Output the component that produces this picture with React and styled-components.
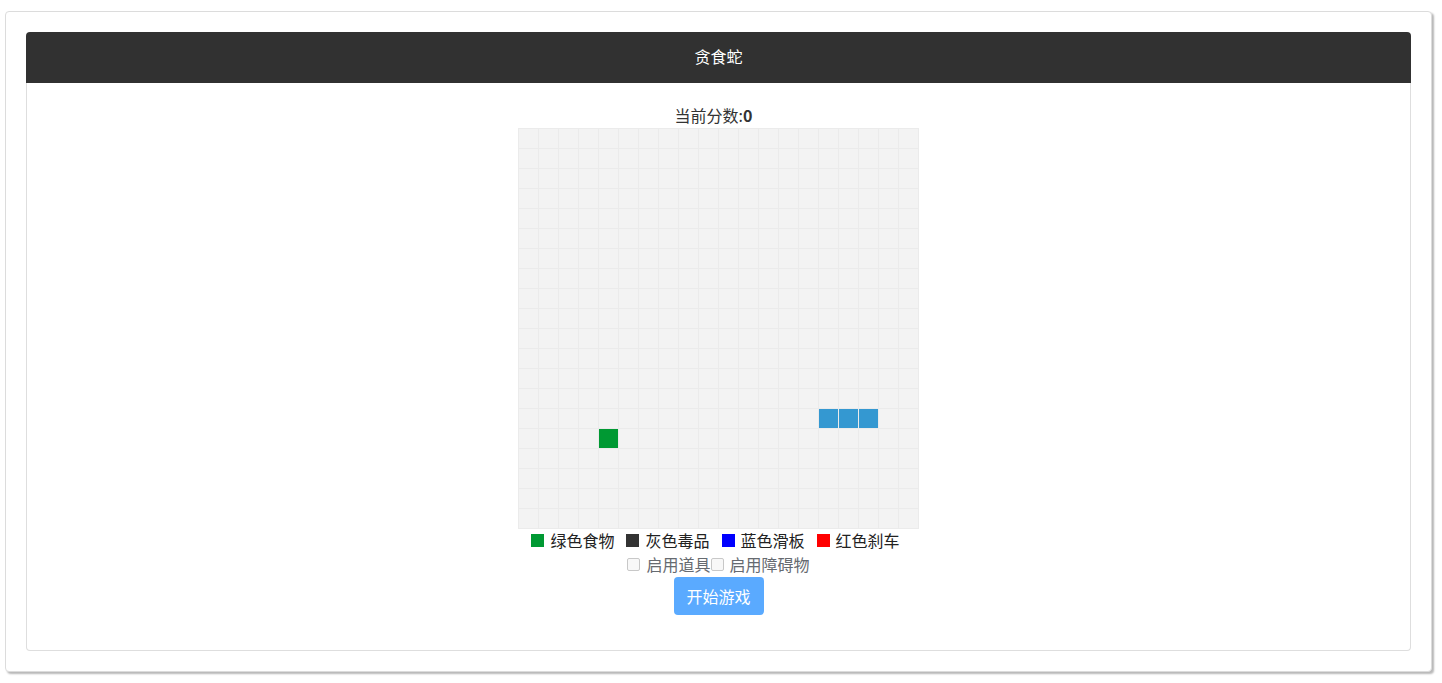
import React from "react";
import styled, { createGlobalStyle } from "styled-components";

const GlobalStyle = createGlobalStyle`
    html, body {
        margin: 0;
        padding: 0;
        background: #fff;
        font-family: "Noto Sans CJK SC", "Noto Sans", sans-serif;
        color: #333;
    }
`;

const COLS = 20;
const ROWS = 20;

const snake = [
    [15, 14],
    [16, 14],
    [17, 14]
];
const food = [4, 15];

const legend = [
    { color: "#009933", label: "绿色食物" },
    { color: "#333333", label: "灰色毒品" },
    { color: "#0000ff", label: "蓝色滑板" },
    { color: "#ff0000", label: "红色刹车" }
];

function cellKind(x, y) {
    if (snake.some(([sx, sy]) => sx === x && sy === y)) return "snake";
    if (food[0] === x && food[1] === y) return "food";
    return "empty";
}

const cellColors = {
    snake: "#3498d1",
    food: "#009933",
    empty: "#f3f3f3"
};

function App() {
    const cells = [];
    for (let y = 0; y < ROWS; y++) {
        for (let x = 0; x < COLS; x++) {
            cells.push(<Cell key={`${x}-${y}`} kind={cellKind(x, y)} />);
        }
    }

    return (
        <>
            <GlobalStyle />
            <Page>
                <Card>
                    <Header>贪食蛇</Header>
                    <Body>
                        <Score>
                            当前分数:<b>0</b>
                        </Score>
                        <Board>{cells}</Board>
                        <Legend>
                            {legend.map(item => (
                                <LegendItem key={item.label}>
                                    <Swatch color={item.color} />
                                    {item.label}
                                </LegendItem>
                            ))}
                        </Legend>
                        <Options>
                            <Option>
                                <Check />
                                启用道具
                            </Option>
                            <Option>
                                <Check />
                                启用障碍物
                            </Option>
                        </Options>
                        <StartButton>开始游戏</StartButton>
                    </Body>
                </Card>
            </Page>
        </>
    );
}

// Styled Components
const Page = styled.div`
    padding: 11px 10px 10px 5px;
`;

const Card = styled.div`
    border: 1px solid #dcdcdc;
    border-radius: 4px;
    box-shadow: 2px 2px 2px #b8b8b8;
    padding: 20px;
    background: #fff;
`;

const Header = styled.div`
    box-sizing: border-box;
    height: 51px;
    padding-bottom: 3px;
    background: #313131;
    border-radius: 4px 4px 0 0;
    color: #fff;
    font-size: 16px;
    display: flex;
    align-items: center;
    justify-content: center;
`;

const Body = styled.div`
    border: 1px solid #dedede;
    border-top: none;
    border-radius: 0 0 4px 4px;
    padding: 21px 0 35px;
    display: flex;
    flex-direction: column;
    align-items: center;
`;

const Score = styled.div`
    font-size: 16px;
    line-height: 22px;
    margin: 0 10px 2px 0;
    color: #333;
    b {
        font-weight: bold;
    }
`;

const Board = styled.div`
    display: grid;
    grid-template-columns: repeat(${COLS}, 20px);
    grid-template-rows: repeat(${ROWS}, 20px);
    border-right: 1px solid #ebebeb;
    border-bottom: 1px solid #ebebeb;
    margin-right: 1px;
`;

const Cell = styled.div`
    box-sizing: border-box;
    border-left: 1px solid #ebebeb;
    border-top: 1px solid #ebebeb;
    background: ${props => cellColors[props.kind]};
`;

const Legend = styled.div`
    display: flex;
    gap: 12px;
    margin-right: 6px;
    font-size: 16px;
    line-height: 22px;
    color: #222;
`;

const LegendItem = styled.div`
    display: flex;
    align-items: center;
`;

const Swatch = styled.span`
    width: 13px;
    height: 13px;
    background: ${props => props.color};
    margin-right: 6px;
`;

const Options = styled.div`
    display: flex;
    margin-top: 1px;
    font-size: 16px;
    line-height: 24px;
    color: #666a70;
`;

const Option = styled.label`
    display: flex;
    align-items: center;
`;

const Check = styled.span`
    box-sizing: border-box;
    width: 13px;
    height: 13px;
    border: 1px solid #c8c8c8;
    border-radius: 2px;
    background: #f8f8f8;
    margin-right: 6px;
`;

const StartButton = styled.button`
    margin-top: 1px;
    width: 90px;
    height: 38px;
    border: none;
    border-radius: 4px;
    background: #5aaaff;
    color: #fff;
    font-family: "Noto Sans CJK SC", sans-serif;
    font-size: 16px;
    cursor: pointer;
`;

export default App;
